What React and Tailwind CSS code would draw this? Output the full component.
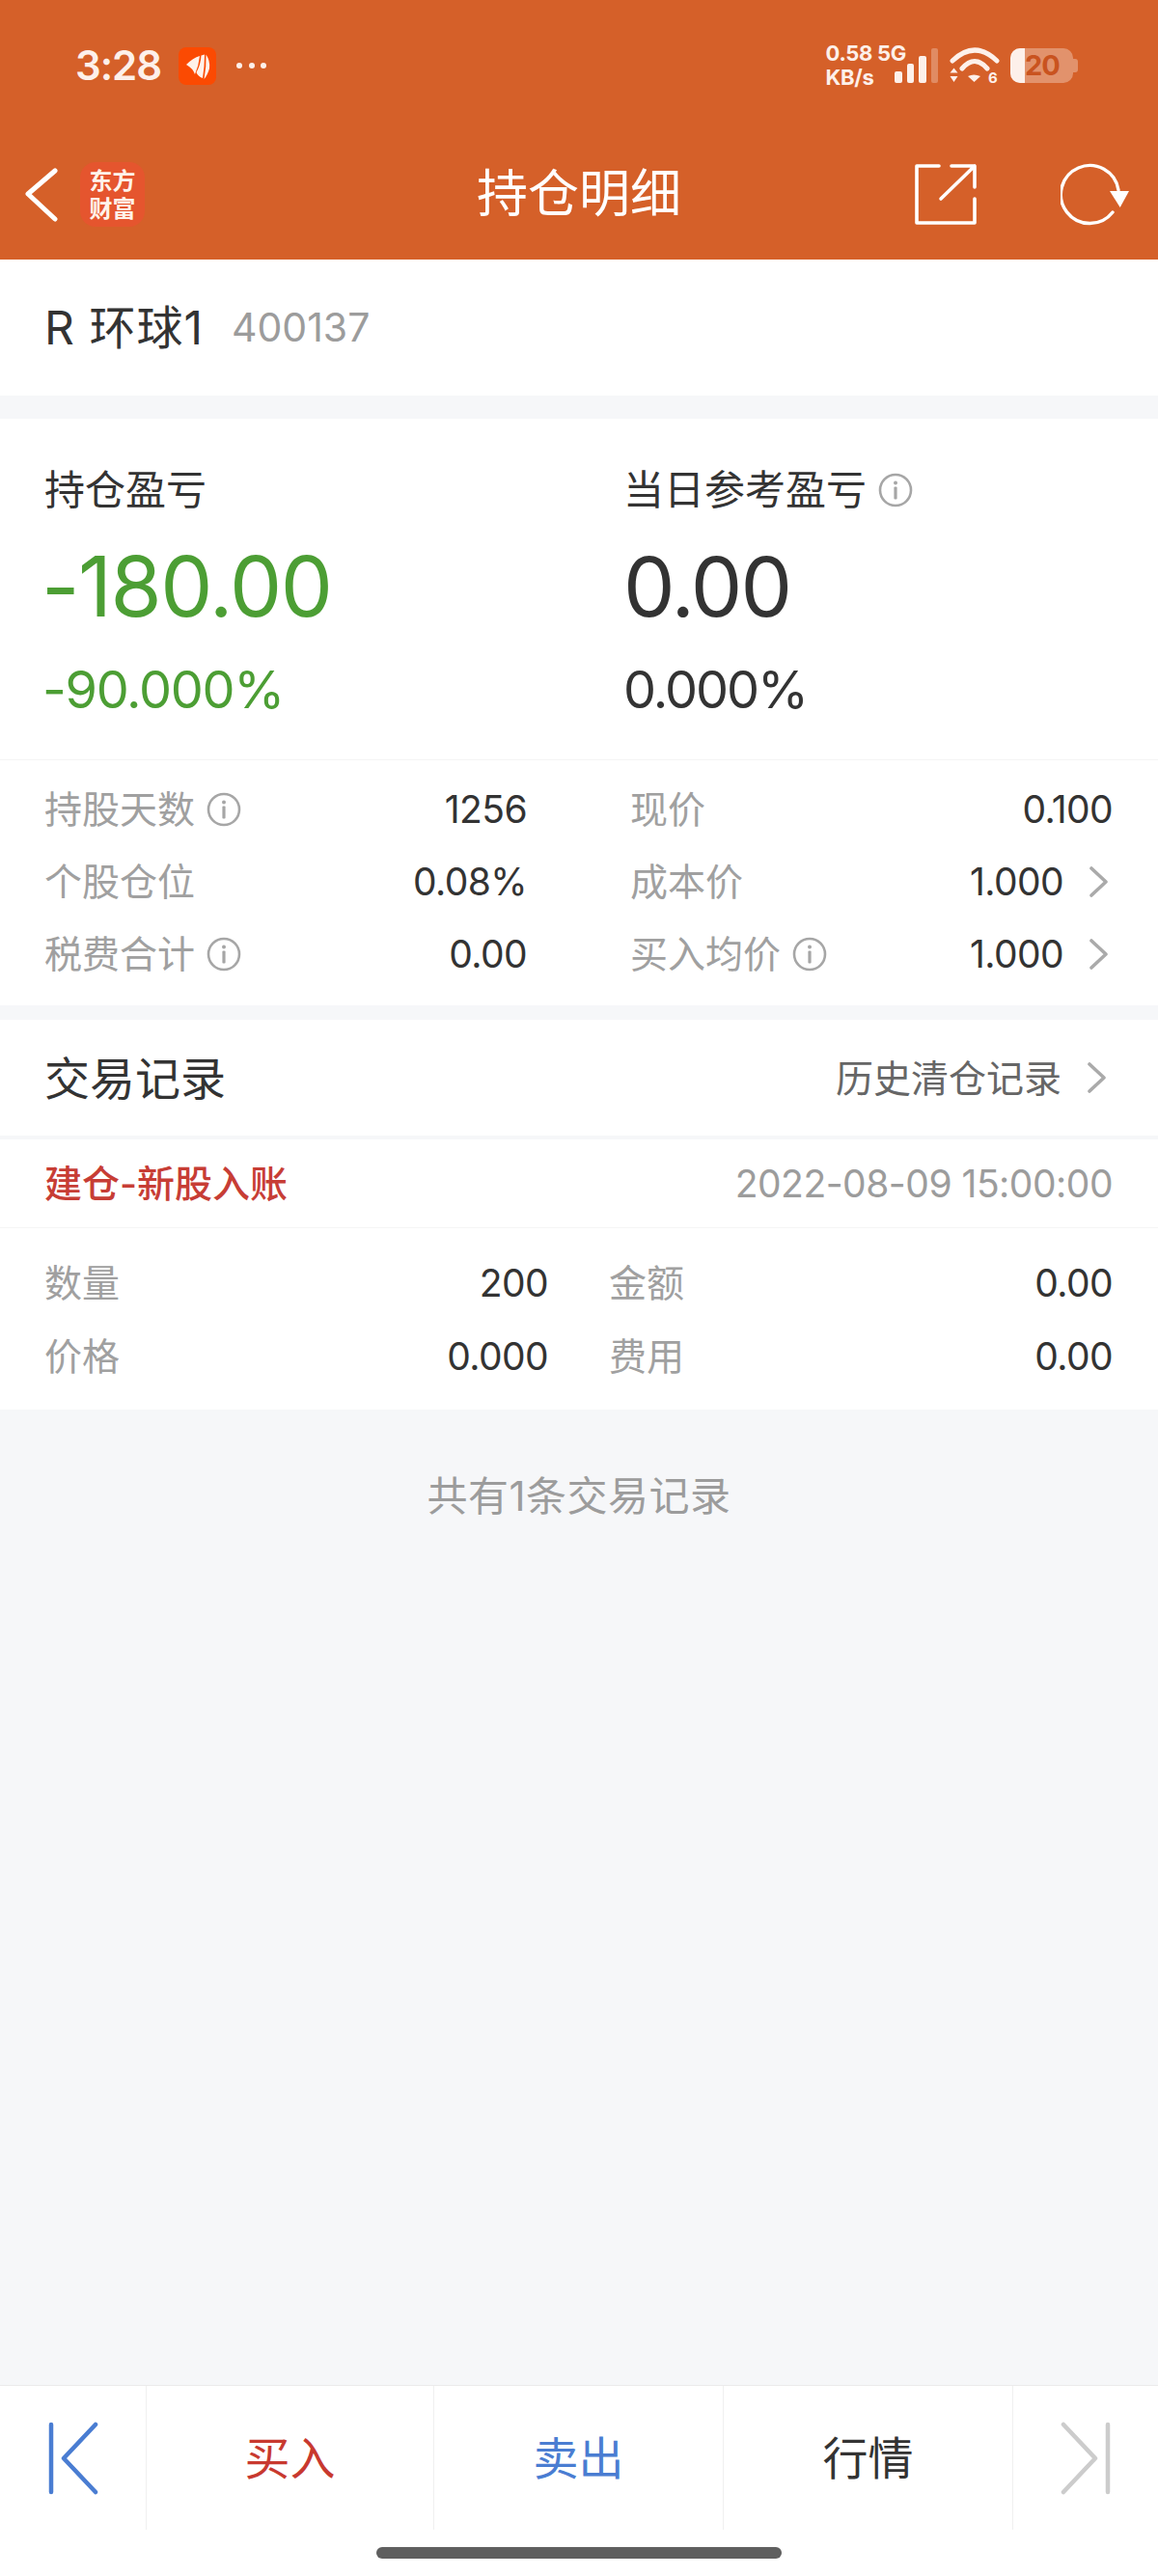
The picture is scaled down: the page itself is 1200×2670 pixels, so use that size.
import React from 'react';

const FONT = 'font-[Inter,"Noto_Sans_CJK_SC",sans-serif]';

const InfoIcon = () => (
  <svg width="36" height="36" viewBox="0 0 36 36" fill="none" className="shrink-0">
    <circle cx="18" cy="18" r="16" stroke="#a6a6a6" strokeWidth="2.6" />
    <circle cx="18" cy="10.5" r="2" fill="#a6a6a6" />
    <rect x="16.4" y="14.5" width="3.2" height="13" rx="1" fill="#a6a6a6" />
  </svg>
);

const Chevron = () => (
  <svg width="20" height="32" viewBox="0 0 20 32" fill="none" className="shrink-0">
    <polyline points="2,2 17,16 2,30" stroke="#aaaaaa" strokeWidth="3.6" strokeLinecap="round" strokeLinejoin="round" />
  </svg>
);

const StatusBar = () => (
  <div className="h-[136px] flex items-center justify-between pl-[78px] pr-[83px] text-[#fdf0ea]">
    <div className="flex items-center">
      <span className="w-[89px] text-[42px] font-semibold leading-none tracking-[-1px]">3:28</span>
      <div className="ml-[18px] w-[39px] h-[39px] rounded-[8px] bg-[#fb4a02] flex items-center justify-center">
        <svg width="39" height="39" viewBox="0 0 39 39" fill="#fff2ea">
          <path d="M8 18 Q15 11 22 9 Q21 19 17 28 Q15 22 8 18Z" />
          <path d="M23.5 8.5 L27 7.5 Q27 20 25 32 Q20 30 18.5 26 Q23 18 23.5 8.5Z" />
          <path d="M28.5 7.5 Q33 14 32 22 Q30 29 26.5 33 Q29 20 28.5 7.5Z" />
        </svg>
      </div>
      <div className="ml-[21px] flex gap-[6.5px]">
        <span className="w-[6px] h-[6px] rounded-full bg-[#fdf0ea]" />
        <span className="w-[6px] h-[6px] rounded-full bg-[#fdf0ea]" />
        <span className="w-[6px] h-[6px] rounded-full bg-[#fdf0ea]" />
      </div>
    </div>
    <div className="flex items-center">
      <div className="flex flex-col text-[22px] font-bold leading-[25px] tracking-[-0.3px]">
        <span className="whitespace-nowrap">0.58 5G</span>
        <span>KB/s</span>
      </div>
      {/* signal bars */}
      <div className="-ml-[12px] flex items-end gap-[5px] h-[36px]">
        <span className="w-[7.5px] h-[12px] rounded-[2px] bg-[#fdf0ea]" />
        <span className="w-[7.5px] h-[20px] rounded-[2px] bg-[#fdf0ea]" />
        <span className="w-[7.5px] h-[28px] rounded-[2px] bg-[#fdf0ea]" />
        <span className="w-[7.5px] h-[36px] rounded-[2px] bg-[#fdf0ea]/30" />
      </div>
      <svg width="54" height="44" viewBox="0 0 54 44" fill="none" className="ml-[11px] mt-[4px]">
        <path d="M4 15 Q27 -7 50 15" stroke="#fdf0ea" strokeWidth="5" strokeLinecap="round" />
        <path d="M14 23 Q27 8 40 23" stroke="#fdf0ea" strokeWidth="5" strokeLinecap="round" />
        <path d="M20 31 Q26 28 33 31 L26.5 37Z" fill="#fdf0ea" />
        <path d="M5.5 22.5 L9.5 27.5 L1.5 27.5Z" fill="#fdf0ea" />
        <path d="M1.5 31 L9.5 31 L5.5 37Z" fill="#fdf0ea" />
        <text x="41" y="38" fontSize="15" fontWeight="700" fill="#fdf0ea" fontFamily="Inter, sans-serif">6</text>
      </svg>
      <div className="ml-[10px] flex items-center">
        <div className="w-[65px] h-[36px] rounded-[10px] bg-[#fdf0ea]/35 overflow-hidden flex">
          <div className="w-[15px] bg-[#fdf0ea]" />
          <span className="flex-1 pr-[14px] text-center text-[29px] font-bold leading-[36px] tracking-[-1px] text-[#c9531f]">20</span>
        </div>
        <div className="w-[5px] h-[14px] rounded-r-[3px] bg-[#fdf0ea]/35" />
      </div>
    </div>
  </div>
);

const NavBar = () => (
  <div className="h-[133px] grid grid-cols-[1fr_auto_1fr] items-center pb-[2px] text-white">
    <div className="flex items-center pl-[25px]">
      <svg width="36" height="56" viewBox="0 0 36 56" fill="none">
        <polyline points="32,3 4,27 32,53" stroke="#ffffff" strokeWidth="5" strokeLinecap="round" strokeLinejoin="round" />
      </svg>
      <div className="ml-[22px] w-[67px] h-[67px] rounded-[16px] bg-[#e5552e] flex flex-col items-center justify-center text-[24px] font-bold leading-[29px] text-[#fff3ea]">
        <span>东方</span>
        <span>财富</span>
      </div>
    </div>
    <h1 className="text-[53px] font-normal leading-none">持仓明细</h1>
    <div className="flex items-center justify-end pr-[29px]">
      <svg width="68" height="68" viewBox="0 0 68 68" fill="none">
        <path d="M27 4 H4 V63 H64 V38" stroke="#ffffff" strokeWidth="3.6" strokeLinejoin="round" strokeLinecap="round" />
        <path d="M40 4 H64 V26 M64 4 L29 38" stroke="#ffffff" strokeWidth="3.6" strokeLinejoin="round" strokeLinecap="round" />
      </svg>
      <svg width="72" height="66" viewBox="0 0 72 66" fill="none" className="ml-[85px]">
        <path d="M54 51 A30 30 0 1 1 60 28" stroke="#ffffff" strokeWidth="3.4" strokeLinecap="round" />
        <path d="M51 29 L71 29 L61.7 46Z" fill="#ffffff" />
      </svg>
    </div>
  </div>
);

const StatRow = ({ label, value, info, arrow }) => (
  <div className="h-[75px] flex items-center justify-between">
    <div className="flex items-center gap-[12px]">
      <span className="text-[39px] leading-none text-[#a0a0a0]">{label}</span>
      {info && <InfoIcon />}
    </div>
    <div className="flex items-center">
      <span className="text-[39px] leading-none tracking-[-0.6px] text-[#333333]">{value}</span>
      {arrow && <span className="ml-[27px] mr-[4px] flex"><Chevron /></span>}
    </div>
  </div>
);

const TradeRow = ({ label, value }) => (
  <div className="h-[76px] flex items-center justify-between">
    <span className="text-[39px] leading-none text-[#a0a0a0]">{label}</span>
    <span className="text-[39px] leading-none tracking-[-0.6px] text-[#333333]">{value}</span>
  </div>
);

const NavArrow = ({ color, flip }) => (
  <svg width="54" height="76" viewBox="0 0 54 76" fill="none" className={flip ? '-scale-x-100' : ''}>
    <line x1="4" y1="3" x2="4" y2="73" stroke={color} strokeWidth="4.5" strokeLinecap="round" />
    <polyline points="50,3 17,38 50,73" stroke={color} strokeWidth="4.5" strokeLinecap="round" strokeLinejoin="round" />
  </svg>
);

export default function App() {
  return (
    <div className={`w-[1200px] h-[2670px] flex flex-col bg-[#f6f7f9] overflow-hidden ${FONT}`}>
      {/* Header */}
      <div className="bg-[#d56029]">
        <StatusBar />
        <NavBar />
      </div>

      {/* Stock name */}
      <div className="h-[141px] bg-white flex items-center pl-[46px]">
        <span className="text-[48px] leading-none tracking-[1px] text-[#333333]">R 环球1</span>
        <span className="ml-[29px] text-[41px] leading-none text-[#9c9c9c]">400137</span>
      </div>

      {/* Profit summary */}
      <div className="mt-[24px] bg-white">
        <div className="h-[354px] grid grid-cols-[600px_1fr] pl-[46px] pt-[52px] border-b border-[#f4f4f4]">
          <div>
            <div className="h-[44px] flex items-center text-[42px] leading-none text-[#333333]">持仓盈亏</div>
            <div className="mt-[28px] -ml-[3px] h-[100px] flex items-center text-[86px] leading-none tracking-[-1.5px] text-[#4c9e34]">-180.00</div>
            <div className="mt-[27px] -ml-[2px] h-[60px] flex items-center text-[54px] leading-none tracking-[-1.3px] text-[#4c9e34]">-90.000%</div>
          </div>
          <div>
            <div className="h-[44px] flex items-center gap-[12px] text-[42px] leading-none text-[#333333]">
              当日参考盈亏
              <InfoIcon />
            </div>
            <div className="mt-[28px] h-[100px] flex items-center text-[85px] leading-none tracking-[-2px] text-[#333333]">0.00</div>
            <div className="mt-[27px] h-[60px] flex items-center text-[54px] leading-none tracking-[-2px] text-[#333333]">0.000%</div>
          </div>
        </div>
        <div className="grid grid-cols-[500px_500px] gap-x-[107px] pl-[46px] pt-[13px] pb-[16px]">
          <StatRow label="持股天数" value="1256" info />
          <StatRow label="现价" value="0.100" />
          <StatRow label="个股仓位" value="0.08%" />
          <StatRow label="成本价" value="1.000" arrow />
          <StatRow label="税费合计" value="0.00" info />
          <StatRow label="买入均价" value="1.000" info arrow />
        </div>
      </div>

      {/* Trade records */}
      <div className="mt-[15px] h-[120px] bg-white flex items-center justify-between pl-[46px] pr-[53px]">
        <span className="text-[47px] leading-none text-[#333333]">交易记录</span>
        <div className="flex items-center">
          <span className="text-[39px] leading-none text-[#666666]">历史清仓记录</span>
          <span className="ml-[27px] flex"><Chevron /></span>
        </div>
      </div>
      <div className="mt-[4px] bg-white">
        <div className="h-[92px] flex items-center justify-between pl-[46px] pr-[47px] border-b border-[#f5f5f5]">
          <span className="text-[39px] font-medium leading-none text-[#c73d35]">建仓-新股入账</span>
          <span className="text-[39px] leading-none tracking-[-0.5px] text-[#9c9c9c]">2022-08-09 15:00:00</span>
        </div>
        <div className="grid grid-cols-[522px_522px] gap-x-[63px] pl-[46px] pt-[18px] pb-[18px]">
          <TradeRow label="数量" value="200" />
          <TradeRow label="金额" value="0.00" />
          <TradeRow label="价格" value="0.000" />
          <TradeRow label="费用" value="0.00" />
        </div>
      </div>
      <div className="h-[184px] pb-[4px] flex items-center justify-center text-[42px] leading-none tracking-[0.5px] text-[#9c9c9c]">
        共有1条交易记录
      </div>

      <div className="flex-1" />

      {/* Bottom toolbar */}
      <div className="bg-white border-t border-[#ebebeb]">
        <div className="h-[149px] grid grid-cols-[152px_298px_300px_300px_150px] text-[47px] leading-none">
          <div className="border-r border-[#f0f0f0] flex items-center justify-center">
            <NavArrow color="#4a7dd2" />
          </div>
          <div className="border-r border-[#f0f0f0] flex items-center justify-center text-[#c8392f]">买入</div>
          <div className="border-r border-[#f0f0f0] flex items-center justify-center text-[#4a7dd2]">卖出</div>
          <div className="border-r border-[#f0f0f0] flex items-center justify-center text-[#333333]">行情</div>
          <div className="flex items-center justify-center">
            <NavArrow color="#cccccc" flip />
          </div>
        </div>
        <div className="h-[48px] pt-[18px]">
          <div className="mx-auto w-[420px] h-[12px] rounded-[6px] bg-[#5f5f5f]" />
        </div>
      </div>
    </div>
  );
}
